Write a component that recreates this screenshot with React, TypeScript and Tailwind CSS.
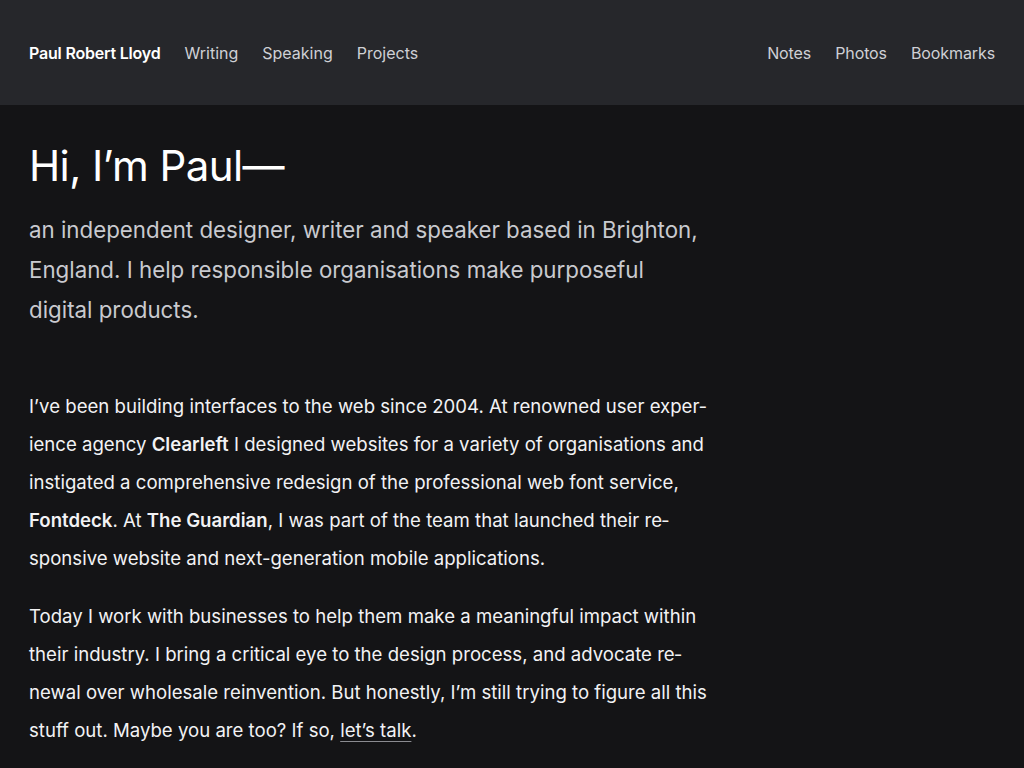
export default function App() {
  return (
    <div
      lang="en"
      className="min-h-screen bg-[#141416] text-[#f4f4f6]"
      style={{ fontFamily: 'Inter, "Liberation Sans", sans-serif' }}
    >
      <header className="h-[105px] bg-[#26272b] px-[29px] flex items-center justify-between text-[16px]">
        <nav className="flex items-center gap-6">
          <a className="font-semibold text-white tracking-[-0.2px]">Paul Robert Lloyd</a>
          <a className="text-[#cfd0d5]">Writing</a>
          <a className="text-[#cfd0d5]">Speaking</a>
          <a className="text-[#cfd0d5]">Projects</a>
        </nav>
        <nav className="flex items-center gap-6 tracking-[-0.1px]">
          <a className="text-[#cfd0d5]">Notes</a>
          <a className="text-[#cfd0d5]">Photos</a>
          <a className="text-[#cfd0d5]">Bookmarks</a>
        </nav>
      </header>

      <main className="px-[29px] pt-[33px] max-w-[744px]">
        <h1 className="text-[42px] leading-[56px] tracking-[-0.6px] text-white">Hi, I’m Paul—</h1>
        <p className="mt-[16px] max-w-[678px] text-[22.3px] leading-[40px] text-[#c9cacf]">
          an independent designer, writer and speaker based in Brighton, England. I help responsible
          organisations make purposeful digital products.
        </p>

        <div className="mt-[57px] text-[18.6px] leading-[38px] hyphens-manual text-[#f2f2f4]">
          <p>
            I’ve been building interfaces to the web since 2004. At renowned user exper&shy;ience
            agency <strong className="font-semibold">Clearleft</strong> I designed websites for a
            variety of organisations and instigated a comprehensive redesign of the professional web
            font service, <strong className="font-semibold">Fontdeck</strong>. At{' '}
            <strong className="font-semibold">The Guardian</strong>, I was part of the team that
            launched their re&shy;sponsive website and next-generation mobile applications.
          </p>
          <p className="mt-[20px]">
            Today I work with businesses to help them make a meaningful impact within their industry.
            I bring a critical eye to the design process, and advocate re&shy;newal over wholesale
            reinvention. But honestly, I’m still trying to figure all this stuff out. Maybe you are
            too? If so, <a className="underline decoration-[#8a8b90] underline-offset-[4px]">let’s talk</a>.
          </p>
        </div>
      </main>
    </div>
  )
}
